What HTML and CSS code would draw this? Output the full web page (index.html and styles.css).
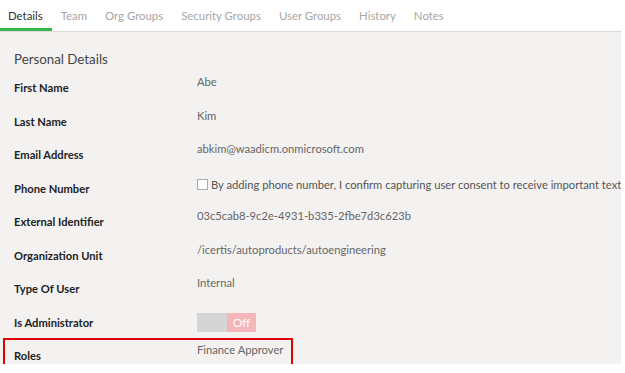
FILE: index.html
```html
<!DOCTYPE html>
<html>
<head>
<meta charset="utf-8">
<link rel="stylesheet" href="styles.css">
</head>
<body>
<div class="page">
  <nav class="tabs">
    <span class="tab active">Details</span>
    <span class="tab">Team</span>
    <span class="tab">Org Groups</span>
    <span class="tab">Security Groups</span>
    <span class="tab">User Groups</span>
    <span class="tab">History</span>
    <span class="tab">Notes</span>
  </nav>
  <main class="content">
    <h2 class="section-title">Personal Details</h2>
    <div class="fields">
      <div class="row"><div class="label">First Name</div><div class="value">Abe</div></div>
      <div class="row"><div class="label">Last Name</div><div class="value">Kim</div></div>
      <div class="row"><div class="label">Email Address</div><div class="value">abkim@waadicm.onmicrosoft.com</div></div>
      <div class="row"><div class="label">Phone Number</div><div class="value consent"><span class="checkbox"></span>By adding phone number, I confirm capturing user consent to receive important text</div></div>
      <div class="row"><div class="label">External Identifier</div><div class="value">03c5cab8-9c2e-4931-b335-2fbe7d3c623b</div></div>
      <div class="row"><div class="label">Organization Unit</div><div class="value">/icertis/autoproducts/autoengineering</div></div>
      <div class="row"><div class="label">Type Of User</div><div class="value">Internal</div></div>
      <div class="row"><div class="label">Is Administrator</div><div class="value"><span class="toggle"><span class="toggle-knob"></span><span class="toggle-off">Off</span></span></div></div>
      <div class="row highlighted"><div class="label">Roles</div><div class="value">Finance Approver</div></div>
    </div>
  </main>
</div>
</body>
</html>
```
FILE: styles.css
```css
html, body {
  margin: 0;
  padding: 0;
  background: #ffffff;
}
body {
  font-family: Lato, "Liberation Sans", sans-serif;
}
.page {
  width: 621px;
  height: 364px;
  display: flex;
  flex-direction: column;
}
.tabs {
  display: flex;
  background: #fff;
  border-bottom: 1px solid #dcdcdc;
  box-sizing: border-box;
  height: 32px;
}
.tab {
  padding: 7px 9px 0 9px;
  font-size: 11.4px;
  color: #a6a6a6;
  height: 31px;
  box-sizing: border-box;
  line-height: 17px;
}
.tab:first-child {
  padding-left: 8px;
}
.tab.active {
  color: #333;
  border-bottom: 3px solid #39b54a;
}
.content {
  flex: 1;
  background: #f3f2f1;
  padding: 0 0 0 14px;
}
.section-title {
  margin: 17px 0 0 0;
  font-size: 13.3px;
  font-weight: normal;
  color: #444;
  line-height: 20px;
}
.fields {
  margin-top: 2px;
  display: flex;
  flex-direction: column;
}
.row {
  display: flex;
  height: 33.5px;
  align-items: flex-start;
  position: relative;
}
.label {
  width: 183px;
  flex: none;
  padding-top: 9px;
  font-size: 11.2px;
  font-weight: bold;
  color: #222;
  line-height: 16px;
}
.value {
  flex: 1;
  min-width: 0;
  overflow: hidden;
  padding-top: 3px;
  font-size: 11.2px;
  color: #666;
  line-height: 16px;
  white-space: nowrap;
}
.consent {
  display: flex;
  align-items: center;
  padding-top: 5px;
  color: #555;
}
.checkbox {
  flex: none;
  width: 11px;
  height: 11px;
  border: 1px solid #aaa;
  background: #fff;
  box-sizing: border-box;
  margin-right: 3px;
}
.toggle {
  display: inline-flex;
  width: 59px;
  height: 19px;
  margin-top: 4px;
}
.toggle-knob {
  width: 30px;
  background: #d5d5d5;
}
.toggle-off {
  flex: 1;
  background: #f4b6ba;
  color: #fff;
  font-size: 12px;
  line-height: 19px;
  text-align: center;
}
.highlighted::before {
  content: "";
  position: absolute;
  left: -11px;
  top: -1px;
  width: 290px;
  height: 28px;
  border: 2px solid #e00000;
  box-sizing: border-box;
}
```
